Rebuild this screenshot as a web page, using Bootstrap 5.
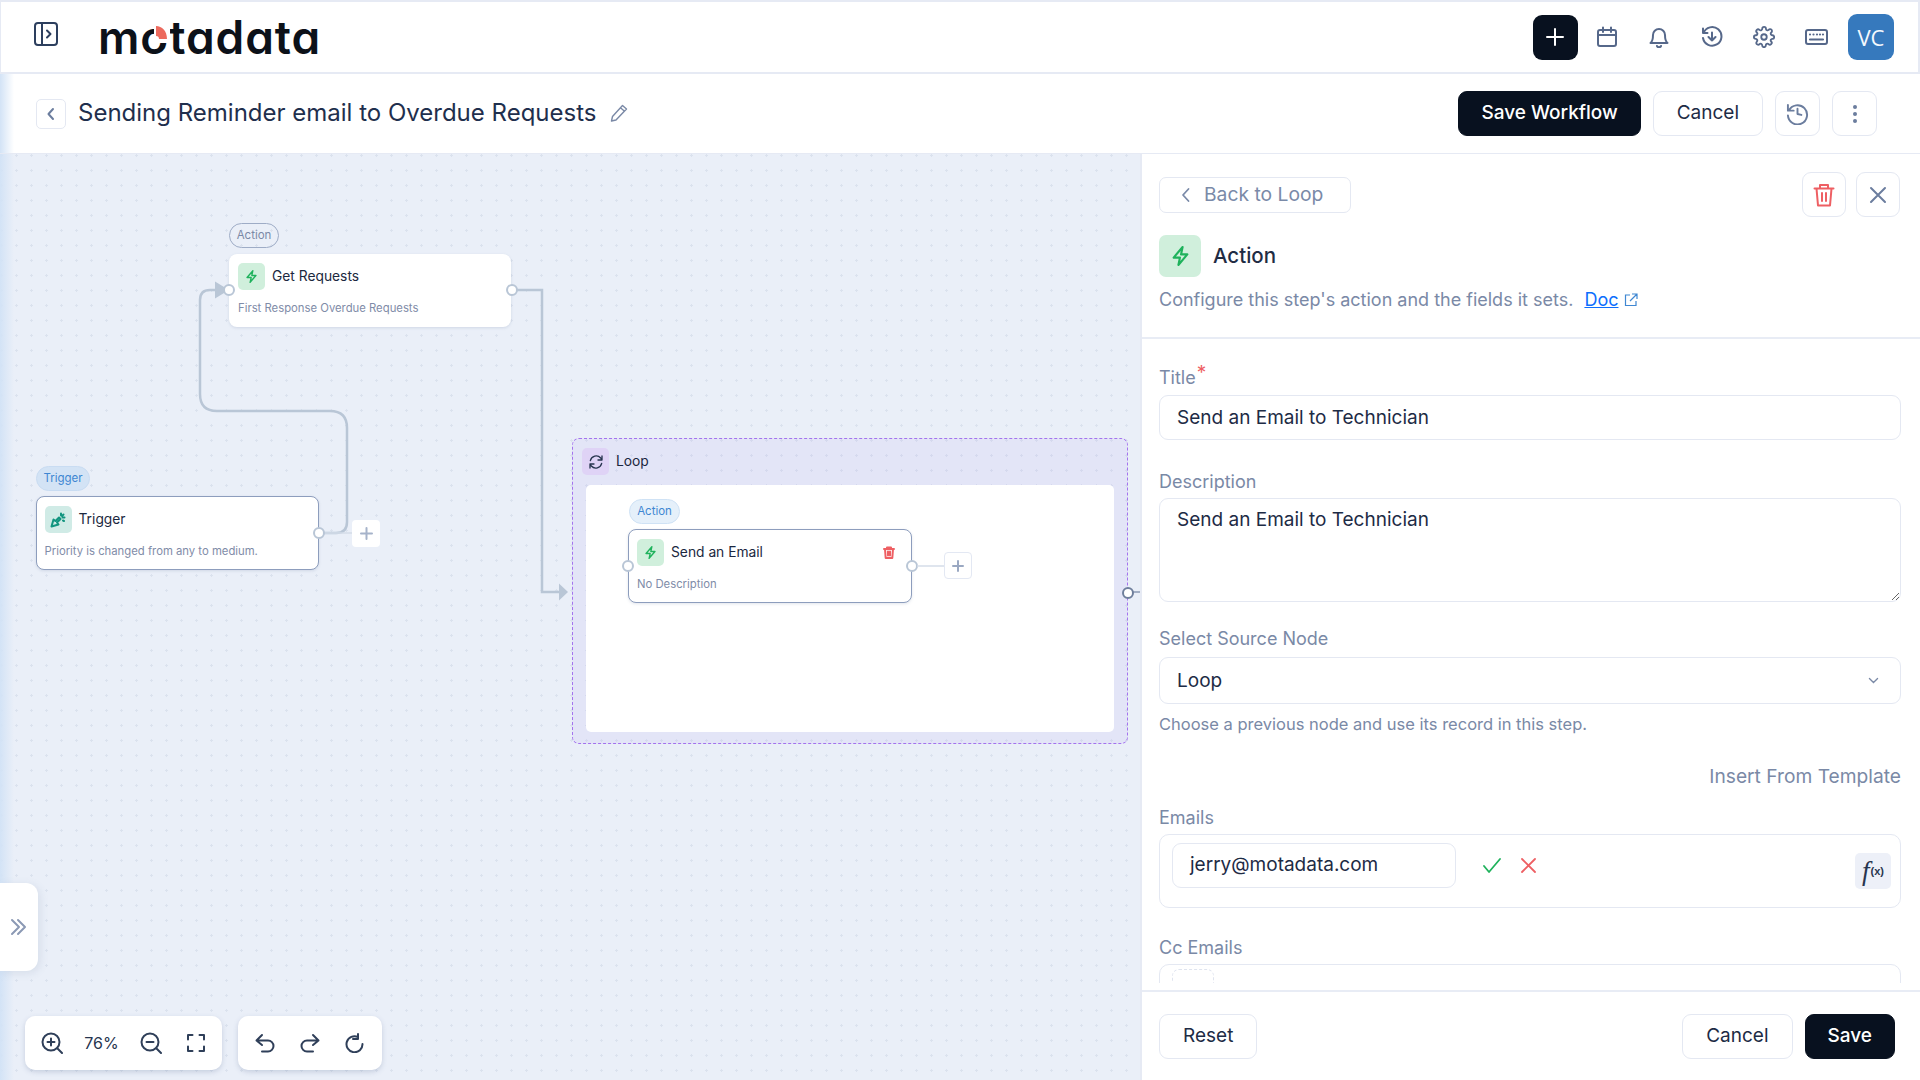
<!DOCTYPE html>
<html lang="en">
<head>
    <meta charset="UTF-8">
    <meta name="viewport" content="width=device-width, initial-scale=1.0">
    <title>Workflow editor</title>
    <link href="https://cdn.jsdelivr.net/npm/bootstrap@5.3.3/dist/css/bootstrap.min.css" rel="stylesheet">
    <style>
        html, body { height: 100%; }
        body { font-family: Inter, "Liberation Sans", sans-serif; color: #1d2b45; background: #fff; overflow: hidden; }
        svg { display: block; flex: none; }
        .ico { fill: none; stroke: currentColor; stroke-width: 2; stroke-linecap: round; stroke-linejoin: round; }

        .app-frame { height: 100vh; display: flex; flex-direction: column; }
        .top-bar { height: 74px; flex: none; border: 1px solid #e6eaf4; border-width: 2px 2px 2px 1px; padding: 0 24px 0 33px; color: #56688a; }
        .side-toggle { color: #2d3f5e; margin-top: -6px; }
        .logo-wrap { position: relative; margin-left: 40px; font-size: 46px; font-weight: 600; line-height: 1; color: #0c1119; letter-spacing: .9px; font-feature-settings: "cv11"; }
        .logo-cut { position: absolute; left: 56px; top: 11px; }
        .top-plus { width: 45px; height: 45px; border-radius: 9px; background: #08111f; color: #fff; margin-right: 3px; }
        .top-ico { width: 52.500px; display: flex; justify-content: center; }
        .top-avatar { width: 46px; height: 46px; border-radius: 9px; background: #3679bd; color: #f3f8fd; font-family: "Open Sans", sans-serif; font-size: 22px; margin-left: 5px; }

        .sub-bar { height: 80px; flex: none; border-bottom: 1px solid #e6eaf4; padding: 0 43px 0 36px; background: linear-gradient(to right, #d3e3f6, rgba(211, 227, 246, 0) 14px); }
        .back-square { width: 30px; height: 30px; border: 1px solid #e4e8f2; border-radius: 5px; color: #6b7d9e; background: #fff; }
        .flow-title { font-size: 24px; margin: 0 0 0 12px; font-weight: 400; color: #1f2f4d; }
        .title-pen { margin: -2px 0 0 14px; }
        .btn-dark-navy { background: #08111f; color: #fff; border: 1px solid #08111f; border-radius: 9px; font-size: 19px; font-weight: 500; height: 45px; padding: 0 22px; }
        .btn-dark-navy:hover { background: #08111f; color: #fff; }
        .btn-line { background: #fff; color: #1d2b45; border: 1px solid #e4e8f2; border-radius: 9px; font-size: 19px; height: 45px; padding: 0 23px; }
        .btn-square { width: 45px; padding: 0; color: #6b7d9e; display: flex; align-items: center; justify-content: center; }

        .work-row { flex: 1; min-height: 0; display: flex; }
        .flow-canvas { position: relative; width: 1140px; flex: none; overflow: hidden; background-color: #eaeff8; background-image: radial-gradient(circle, #dbe2ee 1.1px, transparent 1.4px); background-size: 15px 15px; background-position: -6px -6px; }
        .side-glow { position: absolute; left: 0; top: 0; bottom: 0; width: 14px; background: linear-gradient(to right, #d3e3f6, rgba(211, 227, 246, 0)); z-index: 3; }
        .wires { position: absolute; left: 0; top: 0; }

        .flow-node { position: absolute; width: 283px; height: 73px; background: #fff; border-radius: 8px; padding: 9px 9px 0; box-shadow: 0 1px 3px rgba(90, 110, 150, .18); }
        .flow-node.is-picked { border: 1px solid #8d9dbd; padding: 9px 8px 0; }
        #nodeGet { left: 229px; top: 100px; width: 282px; }
        #nodeTrigger { left: 35.500px; top: 342px; height: 74px; }
        #nodeEmail { left: 42px; top: 44px; width: 284px; height: 74px; }
        .node-ico { width: 27px; height: 27px; border-radius: 5px; }
        .tint-green { background: #d0efdc; color: #1fb25c; }
        .tint-teal { background: #d0ebe6; color: #12957f; }
        .tint-purple { background: #dfd3f6; color: #27354f; }
        .node-name { font-size: 13.800px; font-weight: 400; margin-left: 7px; color: #1b2840; }
        .node-desc { font-size: 11.300px; color: #7f8ca8; margin-top: 10px; line-height: 16px; white-space: nowrap; }
        .node-pill { position: absolute; font-size: 11.500px; line-height: 1; border-radius: 13px; display: flex; align-items: center; justify-content: center; }
        .pill-grey { left: 229px; top: 69px; width: 50px; height: 25px; border: 1px solid #9eacc6; color: #7a89a6; }
        .pill-blue { left: 36px; top: 312px; width: 54px; height: 25px; background: #d3e3f5; border: 1px solid #c9dcf2; color: #3f87d2; }
        .pill-pale { left: 43px; top: 14px; width: 51px; height: 25px; background: #e5f0fa; border: 1px solid #cfe2f5; color: #3f87d2; }
        .add-box { position: absolute; width: 28px; height: 27px; background: #fff; border-radius: 4px; color: #a6b3ca; display: flex; align-items: center; justify-content: center; }
        #addTrigger { left: 352px; top: 366px; }
        #addEmail { left: 358px; top: 67px; border: 1px solid #e3e8f3; color: #9aa8c2; }
        .wire-dot { position: absolute; width: 12px; height: 12px; border-radius: 50%; background: #fff; border: 2px solid #b9c6d6; }
        #dotGetIn { left: 223px; top: 130px; }
        #dotGetOut { left: 506px; top: 130px; }
        #dotTrigOut { left: 313px; top: 373px; }
        #dotMailIn { left: 36px; top: 75px; }
        #dotMailOut { left: 320px; top: 75px; }

        .loop-box { position: absolute; left: 572px; top: 284px; width: 556px; height: 306px; border: 1px dashed #a473ee; border-radius: 7px; background: rgba(150, 110, 240, .08); }
        .loop-head { padding: 9px 0 0 9px; }
        .loop-inner { position: absolute; left: 13px; top: 46px; width: 528px; height: 247px; background: #fff; border-radius: 5px; }
        .loop-trash { position: absolute; right: 16px; top: 16px; color: #ee5f63; }
        .loop-out { position: absolute; left: 549px; top: 148px; width: 12px; height: 12px; border-radius: 50%; background: #fff; border: 2px solid #6f7f9c; }

        .slide-tab { position: absolute; left: 0; top: 729px; width: 38px; height: 88px; background: #fff; border-radius: 0 12px 12px 0; color: #8b99b4; box-shadow: 2px 2px 8px rgba(90, 110, 150, .14); z-index: 4; }
        .zoom-tools { position: absolute; top: 862px; height: 54px; background: #fff; border-radius: 10px; box-shadow: 0 2px 5px rgba(90, 110, 150, .25); color: #2f3f59; }
        #toolsZoom { left: 25px; width: 197px; padding: 0 17px 0 16px; }
        #toolsHistory { left: 238px; width: 144px; padding: 0 17px; }
        .zoom-value { font-size: 16px; color: #26354f; }
        .zoom-fit { margin-left: 4px; }

        .side-panel { width: 780px; flex: none; border-left: 2px solid #e6eaf4; display: flex; flex-direction: column; min-height: 0; background: #fff; }
        .panel-head { flex: none; padding: 18px 19px 26px 17px; border-bottom: 2px solid #e8ecf5; }
        .back-chip { height: 36px; width: 192px; border: 1px solid #e4e8f2; border-radius: 7px; color: #7a8aa8; font-size: 19.300px; background: #fff; }
        .panel-tools { gap: 10px; margin-right: 1px; }
        .panel-tools .btn-square { width: 44px; }
        .action-row { margin-top: 18px; }
        .action-ico { width: 42px; height: 42px; border-radius: 7px; }
        .action-name { font-size: 20.500px; font-weight: 500; margin-left: 12px; color: #1f2c44; }
        .step-hint { font-size: 18px; color: #7a89a6; line-height: 22px; margin-top: 12px; display: flex; align-items: center; }
        .step-hint a { color: #0d6efd; margin-left: 11px; margin-right: 6px; }
        .panel-form { flex: 1; min-height: 0; overflow: hidden; padding: 27px 19px 0 17px; margin-bottom: 7px; }
        .fld-label { display: block; font-size: 18px; line-height: 24px; color: #7a89a6; margin-bottom: 4px; }
        .fld-label sup { color: #ee5f63; font-size: 19px; top: -.25em; margin-left: 1px; }
        .title-input { margin-top: 5px; }
        .fld-input { height: 45px; border: 1px solid #e4e8f2; border-radius: 9px; font-size: 19px; color: #1d2b45; padding: 0 17px; margin-bottom: 30px; }
        textarea.fld-input { height: 104px; padding: 7px 17px; display: block; margin-bottom: 25px; }
        .fld-select { height: 47px; border: 1px solid #e4e8f2; border-radius: 9px; font-size: 19px; color: #1d2b45; padding: 1px 17px 0; margin-top: 6px; background-image: url("data:image/svg+xml,%3csvg xmlns='http://www.w3.org/2000/svg' viewBox='0 0 16 16'%3e%3cpath fill='none' stroke='%237a89a6' stroke-linecap='round' stroke-width='1.6' d='m3 5.500 5 5 5-5'/%3e%3c/svg%3e"); background-size: 13px 13px; background-position: right 20px center; }
        .fld-help { font-size: 16.500px; line-height: 22px; color: #7a89a6; margin-top: 9px; }
        .tpl-link { font-size: 19.200px; line-height: 24px; color: #7a89a6; text-align: right; margin-top: 29px; margin-bottom: 18px; }
        .tag-box { position: relative; height: 74px; border: 1px solid #e4e8f2; border-radius: 10px; padding: 8px 12px; margin-bottom: 28px; }
        .tag-value { width: 284px; height: 45px; border: 1px solid #e4e8f2; border-radius: 9px; font-size: 19px; padding: 0 17px; display: flex; align-items: center; }
        .tag-ok { margin: 15px 0 0 27px; }
        .tag-no { margin: 15px 0 0 20px; }
        .tag-add { width: 42px; height: 45px; border: 1px dashed #dfe4ef; border-radius: 7px; font-size: 22px; color: #1d2b45; display: flex; align-items: center; justify-content: center; margin-top: -4px; padding-bottom: 9px; }
        .fx-btn { position: absolute; right: 9px; top: 18px; width: 36px; height: 36px; border-radius: 5px; background: #edf0f8; color: #27354f; font-family: "Liberation Serif", serif; font-style: italic; font-size: 27px; display: flex; align-items: center; justify-content: center; line-height: 1; }
        .fx-btn span { font-family: "Liberation Sans", sans-serif; font-style: normal; font-size: 11px; font-weight: 700; margin-left: 1px; }
        .panel-foot { flex: none; height: 90px; border-top: 2px solid #e8ecf5; padding: 22px 25px 0 17px; }
    </style>
</head>
<body>
<div class="app-frame">
    <header class="top-bar d-flex align-items-center">
        <svg class="ico side-toggle" width="24" height="24" viewBox="0 0 24 24" stroke-width="1.500"><rect x="1" y="1" width="22" height="22" rx="3"/><path d="M8 1v22M13 8.500l3.500 3.500-3.500 3.500"/></svg>
        <div class="logo-wrap">motadata
            <svg class="logo-cut" width="16" height="18" viewBox="0 0 16 18"><path d="M0 0h16v18H0z" fill="#fff"/><path d="M2 1c6 0 11 5 11 13H5a3 3 0 0 0-3-3z" fill="#ec6a5e"/></svg>
        </div>
        <div class="d-flex align-items-center ms-auto">
            <div class="top-plus d-flex align-items-center justify-content-center">
                <svg width="20" height="20" viewBox="0 0 20 20" class="ico"><path d="M10 2v16M2 10h16"/></svg>
            </div>
            <div class="top-ico"><svg width="22" height="22" viewBox="0 0 22 22" class="ico"><rect x="2" y="4" width="18" height="16" rx="2"/><path d="M2 9h18M7 1.500V6M15 1.500V6"/></svg></div>
            <div class="top-ico"><svg width="22" height="22" viewBox="0 0 22 22" class="ico"><path d="M5 9a6 6 0 0 1 12 0c0 6 2.500 8 2.500 8h-17S5 15 5 9M9 20a2.200 2.200 0 0 0 4 0"/></svg></div>
            <div class="top-ico"><svg width="22" height="22" viewBox="0 0 22 22" class="ico"><path d="M2 2.500V7h4.500M2.500 7A9.300 9.300 0 1 1 2 12M11 6.500v8M7.500 11l3.500 3.500 3.500-3.500"/></svg></div>
            <div class="top-ico"><svg width="22" height="22" viewBox="0 0 24 24" class="ico"><circle cx="12" cy="12" r="3"/><path d="M19.400 15a1.700 1.700 0 0 0 .3 1.800l.1.100a2 2 0 1 1-2.900 2.900l-.1-.1a1.700 1.700 0 0 0-2.800 1.200v.2a2 2 0 1 1-4 0v-.1a1.700 1.700 0 0 0-2.900-1.200l-.1.100a2 2 0 1 1-2.800-2.900l.1-.1a1.700 1.700 0 0 0-1.200-2.800H3a2 2 0 1 1 0-4h.1a1.700 1.700 0 0 0 1.200-2.900l-.1-.1A2 2 0 1 1 7 4.200l.1.1a1.700 1.700 0 0 0 1.900.3h.1a1.700 1.700 0 0 0 1-1.500V3a2 2 0 1 1 4 0v.1a1.700 1.700 0 0 0 2.900 1.200l.1-.1a2 2 0 1 1 2.800 2.800l-.1.100a1.700 1.700 0 0 0-.3 1.900v.1a1.700 1.700 0 0 0 1.500 1h.1a2 2 0 1 1 0 4h-.1a1.700 1.700 0 0 0-1.500 1z"/></svg></div>
            <div class="top-ico"><svg width="23" height="16" viewBox="0 0 23 16" class="ico"><rect x="1" y="1" width="21" height="14" rx="2"/><path d="M5 5.500h0M8.500 5.500h0M12 5.500h0M15 5.500h0M18 5.500h0M5 10.500h13" stroke-width="2.200"/></svg></div>
            <div class="top-avatar d-flex align-items-center justify-content-center">VC</div>
        </div>
    </header>

    <div class="sub-bar d-flex align-items-center">
        <div class="back-square d-flex align-items-center justify-content-center">
            <svg width="14" height="14" viewBox="0 0 14 14" class="ico"><path d="M9 2 4.500 7 9 12"/></svg>
        </div>
        <h1 class="flow-title">Sending Reminder email to Overdue Requests</h1>
        <svg class="title-pen" width="18" height="18" viewBox="0 0 18 18" fill="none" stroke="#7a89a6" stroke-width="1.400" stroke-linejoin="round"><path d="M12.500 1.500 16.500 5 6 16l-4.500 1 1-4.500zM10.500 3.700l4 3.600"/></svg>
        <div class="d-flex align-items-center gap-2 ms-auto">
            <button class="btn btn-dark-navy">Save Workflow</button>
            <button class="btn btn-line ms-1 me-1">Cancel</button>
            <button class="btn btn-line btn-square"><svg width="23" height="23" viewBox="0 0 24 24" class="ico"><path d="M2 3v6h6M3 9a10 10 0 1 1-1 5M12 7v5.500l4 1"/></svg></button>
            <button class="btn btn-line btn-square ms-1"><svg width="6" height="20" viewBox="0 0 6 20" fill="currentColor"><circle cx="3" cy="3" r="2"/><circle cx="3" cy="10" r="2"/><circle cx="3" cy="17" r="2"/></svg></button>
        </div>
    </div>

    <div class="work-row">
        <section class="flow-canvas">
            <div class="side-glow"></div>
            <svg class="wires" width="1140" height="926" viewBox="0 154 1140 926" fill="none">
                <path d="M318 533h18q11 0 11-11V428q0-17-17-17H217q-17 0-17-17V300q0-10 10-10h6" stroke="#b9c6d6" stroke-width="2.500"/>
                <path d="M215 281.500 229 290l-14 8.500z" fill="#b9c6d6"/>
                <path d="M511 290h31v302h18" stroke="#b9c6d6" stroke-width="2.500"/>
                <path d="M559 583.500 568 592l-9 8.500z" fill="#b9c6d6"/>
                <path d="M324 533h28" stroke="#d5dde9" stroke-width="1.500"/>
                <path d="M1128 592h12" stroke="#8a99b3" stroke-width="1.500"/>
            </svg>

            <span class="node-pill pill-grey">Action</span>
            <div class="flow-node" id="nodeGet">
                <div class="d-flex align-items-center">
                    <div class="node-ico tint-green d-flex align-items-center justify-content-center"><svg width="11" height="13" viewBox="0 0 16 19" class="ico" stroke-width="1.700"><path d="M10 1 1.500 11h6L6 18l8.500-10h-6z"/></svg></div>
                    <span class="node-name">Get Requests</span>
                </div>
                <div class="node-desc">First Response Overdue Requests</div>
            </div>
            <span class="wire-dot" id="dotGetIn"></span>
            <span class="wire-dot" id="dotGetOut"></span>

            <span class="node-pill pill-blue">Trigger</span>
            <div class="flow-node is-picked" id="nodeTrigger">
                <div class="d-flex align-items-center">
                    <div class="node-ico tint-teal d-flex align-items-center justify-content-center"><svg width="16" height="16" viewBox="0 0 16 16" class="ico" stroke-width="1"><path d="M1.500 14.500 3.500 7.500 5.500 9 9 5.500 10.500 7 7 10.500 8.500 12.500zM11 1.500v2M14.500 5.500h-2M13.500 2.500 12 4M13 8.500l1 .5"/></svg></div>
                    <span class="node-name">Trigger</span>
                </div>
                <div class="node-desc">Priority is changed from any to medium.</div>
            </div>
            <span class="wire-dot" id="dotTrigOut"></span>
            <div class="add-box" id="addTrigger"><svg width="13" height="13" viewBox="0 0 13 13" class="ico" stroke-width="1.600"><path d="M6.500 1v11M1 6.500h11"/></svg></div>

            <div class="loop-box">
                <div class="loop-head d-flex align-items-center">
                    <div class="node-ico tint-purple d-flex align-items-center justify-content-center"><svg width="16" height="16" viewBox="0 0 24 24" class="ico" stroke-width="2.400"><path d="M21 3v6h-6M3 21v-6h6M3.500 10A9 9 0 0 1 19 6l2 3M20.500 14A9 9 0 0 1 5 18l-2-3"/></svg></div>
                    <span class="node-name">Loop</span>
                </div>
                <div class="loop-inner">
                    <span class="node-pill pill-pale">Action</span>
                    <div class="flow-node is-picked" id="nodeEmail">
                        <div class="d-flex align-items-center">
                            <div class="node-ico tint-green d-flex align-items-center justify-content-center"><svg width="11" height="13" viewBox="0 0 16 19" class="ico" stroke-width="1.700"><path d="M10 1 1.500 11h6L6 18l8.500-10h-6z"/></svg></div>
                            <span class="node-name">Send an Email</span>
                        </div>
                        <div class="node-desc">No Description</div>
                        <svg class="loop-trash ico" width="12" height="13" viewBox="0 0 12 13" stroke-width="1"><path d="M1 3h10M4 3V1.500h4V3M2 3l.7 9h6.600L10 3M5 5.500v4M7 5.500v4"/></svg>
                    </div>
                    <span class="wire-dot" id="dotMailIn"></span>
                    <span class="wire-dot" id="dotMailOut"></span>
                    <svg class="wires" width="528" height="247" fill="none"><path d="M331 81h27" stroke="#d5dde9" stroke-width="1.500"/></svg>
                    <div class="add-box" id="addEmail"><svg width="12" height="12" viewBox="0 0 12 12" class="ico" stroke-width="1.100"><path d="M6 1v10M1 6h10"/></svg></div>
                </div>
                <span class="loop-out"></span>
            </div>

            <div class="slide-tab d-flex align-items-center justify-content-center">
                <svg width="18" height="18" viewBox="0 0 18 18" class="ico" stroke-width="1.400"><path d="M2 2l7 7-7 7M8 2l7 7-7 7"/></svg>
            </div>

            <div class="zoom-tools d-flex align-items-center justify-content-between" id="toolsZoom">
                <svg width="22" height="22" viewBox="0 0 22 22" class="ico"><circle cx="10" cy="10" r="8.500"/><path d="m16.500 16.500 4.500 4.500M10 6.500v7M6.500 10h7"/></svg>
                <span class="zoom-value">76%</span>
                <svg width="22" height="22" viewBox="0 0 22 22" class="ico"><circle cx="10" cy="10" r="8.500"/><path d="m16.500 16.500 4.500 4.500M6.500 10h7"/></svg>
                <svg class="ico zoom-fit" width="18" height="18" viewBox="0 0 18 18" stroke-linecap="butt"><path d="M1 5.500V1h4.500M12.500 1H17v4.500M17 12.500V17h-4.500M5.500 17H1v-4.500"/></svg>
            </div>
            <div class="zoom-tools d-flex align-items-center justify-content-between" id="toolsHistory">
                <svg width="20" height="20" viewBox="0 0 20 20" class="ico"><path d="M7 2 1.500 7.500 7 12M1.500 7.500H13a5.500 5.500 0 0 1 0 11H7"/></svg>
                <svg width="20" height="20" viewBox="0 0 20 20" class="ico"><path d="M13 2l5.500 5.500L13 12M18.500 7.500H7a5.500 5.500 0 0 0 0 11h6"/></svg>
                <svg width="20" height="20" viewBox="0 0 20 20" class="ico"><path d="M13 1v5h-5M17.500 11A8 8 0 1 1 13 4"/></svg>
            </div>
        </section>

        <aside class="side-panel">
            <div class="panel-head">
                <div class="d-flex align-items-center justify-content-between">
                    <button class="btn back-chip d-flex align-items-center gap-2 p-0 ps-3">
                        <svg class="ms-1" width="12" height="16" viewBox="0 0 12 16" fill="none" stroke="currentColor" stroke-width="1.800" stroke-linecap="round" stroke-linejoin="round"><path d="M8.500 2 3 8l5.500 6"/></svg>
                        <span class="ms-1">Back to Loop</span>
                    </button>
                    <div class="panel-tools d-flex">
                        <button class="btn btn-line btn-square"><svg width="22" height="24" viewBox="0 0 22 24" fill="none" stroke="#ee5f63" stroke-width="2" stroke-linecap="round" stroke-linejoin="round"><path d="M1.500 5.500h19M7 5.500V2h8v3.500M3.500 5.500 5 22.500h12l1.500-17M9 10v8M13 10v8"/></svg></button>
                        <button class="btn btn-line btn-square"><svg width="18" height="18" viewBox="0 0 18 18" class="ico"><path d="M2 2l14 14M16 2 2 16"/></svg></button>
                    </div>
                </div>
                <div class="d-flex align-items-center action-row">
                    <div class="action-ico tint-green d-flex align-items-center justify-content-center"><svg width="17" height="20" viewBox="0 0 16 19" class="ico" stroke-width="1.700"><path d="M10 1 1.500 11h6L6 18l8.500-10h-6z"/></svg></div>
                    <span class="action-name">Action</span>
                </div>
                <div class="step-hint"><span>Configure this step's action and the fields it sets.</span><a href="#">Doc</a>
                    <svg width="14" height="14" viewBox="0 0 14 14" fill="none" stroke="#3f87d2" stroke-width="1.200"><path d="M6 2H1.500v10.500H12V8M8 1h5v5M13 1 6 8"/></svg>
                </div>
            </div>

            <form class="panel-form">
                <label class="fld-label">Title<sup>*</sup></label>
                <input class="form-control fld-input title-input" value="Send an Email to Technician">
                <label class="fld-label">Description</label>
                <textarea class="form-control fld-input">Send an Email to Technician</textarea>
                <label class="fld-label">Select Source Node</label>
                <select class="form-select fld-select"><option>Loop</option></select>
                <div class="fld-help">Choose a previous node and use its record in this step.</div>
                <div class="tpl-link">Insert From Template</div>
                <label class="fld-label">Emails</label>
                <div class="tag-box d-flex align-items-start">
                    <div class="tag-value">jerry@motadata.com</div>
                    <svg class="tag-ok" width="18" height="15" viewBox="0 0 18 15" fill="none" stroke="#1fb25c" stroke-width="1.800" stroke-linecap="round" stroke-linejoin="round"><path d="m1 8 5 6L17 1"/></svg>
                    <svg class="tag-no" width="15" height="15" viewBox="0 0 15 15" fill="none" stroke="#ee5f63" stroke-width="1.800" stroke-linecap="round"><path d="m1 1 13 13M14 1 1 14"/></svg>
                    <div class="fx-btn">f<span>(x)</span></div>
                </div>
                <label class="fld-label">Cc Emails</label>
                <div class="tag-box d-flex align-items-start">
                    <div class="tag-add">+</div>
                    <div class="fx-btn">f<span>(x)</span></div>
                </div>
            </form>

            <div class="panel-foot d-flex justify-content-between align-items-start">
                <button type="button" class="btn btn-line">Reset</button>
                <div class="d-flex gap-2">
                    <button type="button" class="btn btn-line me-1">Cancel</button>
                    <button type="button" class="btn btn-dark-navy">Save</button>
                </div>
            </div>
        </aside>
    </div>
</div>
<script src="https://cdn.jsdelivr.net/npm/bootstrap@5.3.3/dist/js/bootstrap.bundle.min.js"></script>
</body>
</html>
